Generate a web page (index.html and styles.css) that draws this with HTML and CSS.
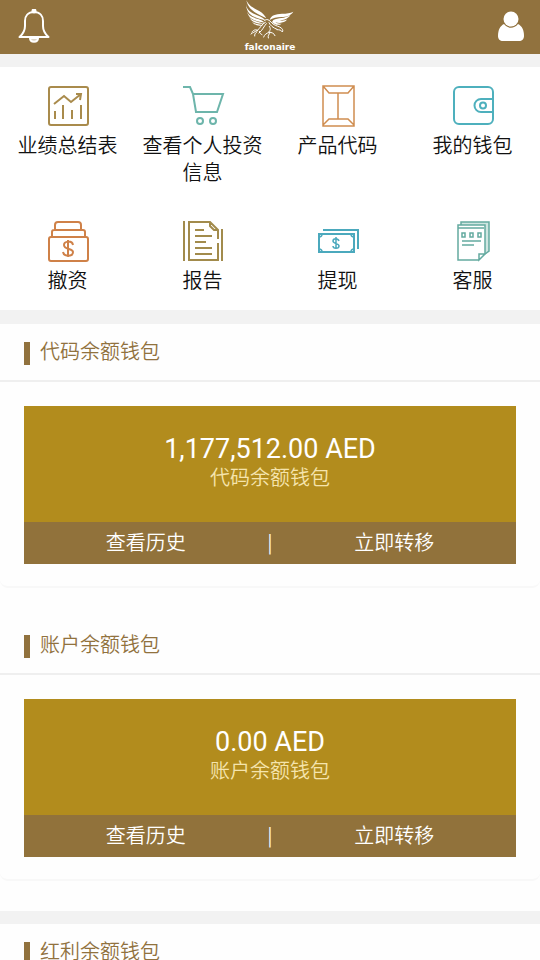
FILE: index.html
```html
<!DOCTYPE html>
<html lang="zh-CN">
<head>
    <meta charset="UTF-8">
    <meta name="viewport" content="width=device-width, initial-scale=1.0">
    <title>falconaire</title>
    <link rel="stylesheet" href="styles.css">
</head>
<body>
    <header class="header">
        <button class="icon-btn" type="button" aria-label="通知">
            <svg width="34" height="36" viewBox="0 0 34 36" fill="none" stroke="#fff" stroke-width="2" stroke-linejoin="round">
                <circle cx="18" cy="2" r="1.500" fill="#fff"/>
                <path d="M18 3C12 3 9 7 9 12v5c0 5-2 8-5.500 11h29C29 25 27 22 27 17v-5c0-5-3-9-9-9z"/>
                <path d="M14 29c0 5 8 5 8 0z" fill="#fff" fill-opacity=".7"/>
            </svg>
        </button>
        <a class="logo" href="#">
            <svg width="50" height="42" viewBox="30 0 150 126" fill="#fff" aria-hidden="true">
                <path d="M34 1c8 18 24 24 40 33 10 6 15 13 20 21C78 45 42 38 34 1z"/>
                <path d="M33 14c4 22 24 27 39 34 9 4 15 8 20 14C74 54 36 54 33 14z"/>
                <path d="M36 34c6 17 20 18 33 23 9 3 15 6 20 11C72 64 42 64 36 34z"/>
                <path d="M42 50c8 13 21 11 44 22-18 0-36-4-44-22z"/>
                <path d="M51 65c10 8 20 7 34 11-14 3-27 0-34-11z"/>
                <path d="M104 60c3-14 18-18 37-19 14 0 25-2 34-6-8 13-22 15-35 16-15 1-27 3-36 9z"/>
                <path d="M115 60c14-8 34-3 51-15-7 13-22 15-33 17 10 1 17 0 24-4-8 12-24 12-36 9 6 4 11 5 19 4-9 7-22 3-29-5z"/>
                <g fill="none" stroke="#fff" stroke-width="3" stroke-linecap="round">
                    <path d="M89 61c10-8 17 4 25 11 8 6 20 7 26 13 4 4 4 8 2 11-3-6-9-7-16-7"/>
                    <path d="M91 67C78 73 77 84 67 91c-7 5-14 6-19 11M94 71C86 79 84 90 72 99"/>
                    <path d="M68 91c-7-4-14 0-17 5M66 95c-5 4-8 8-7 13M73 94c0 5 4 8 8 10"/>
                    <path d="M103 79c5 7 3 12-2 17 9 1 17 4 19 11M104 97c-10 2-16 7-18 14M106 98c-5 5-8 10-6 16"/>
                    <path d="M102 68c4 9 12 15 24 20"/>
                </g>
            </svg>
            <span class="logo-name">falconaire</span>
        </a>
        <button class="icon-btn" type="button" aria-label="个人中心">
            <svg width="26" height="32" viewBox="0 0 26 32" fill="#fff">
                <path d="M6 13C2 15 0 19 0 25c0 3 2 5 5 5h16c3 0 5-2 5-5 0-6-2-10-6-12-4 5-10 5-14 0z"/>
                <circle cx="13" cy="8" r="7.500"/>
            </svg>
        </button>
    </header>

    <nav class="menu">
        <a class="menu-item" href="#">
            <svg class="menu-icon" viewBox="0 0 40 40" stroke="#a98b4c">
                <rect x="1" y="1" width="39" height="38" rx="2"/>
                <path d="M6 18l10-8 7 6L33 8M28 8h5l-1 6M7 25v8M15 19v14M24 24v9M33 19v14"/>
            </svg>
            <span>业绩总结表</span>
        </a>
        <a class="menu-item" href="#">
            <svg class="menu-icon" viewBox="0 0 40 40" stroke="#6db5ab">
                <path d="M0 1h7l3 7h30l-6 18H13L10 8"/>
                <circle cx="17" cy="35" r="3"/>
                <circle cx="30" cy="35" r="3"/>
            </svg>
            <span>查看个人投资信息</span>
        </a>
        <a class="menu-item" href="#">
            <svg class="menu-icon thin" viewBox="0 0 40 40" stroke="#cf8d50">
                <path d="M5 0h31v40H5zM5 0l6 7h19l6-7M5 40v-1l6-6h19l6 6v1M20 7v26"/>
            </svg>
            <span>产品代码</span>
        </a>
        <a class="menu-item" href="#">
            <svg class="menu-icon" viewBox="0 0 40 40" stroke="#4eb0bd">
                <rect x="1" y="1" width="39" height="37" rx="5"/>
                <path d="M40 13H28a6 6 0 0 0 0 13h12"/>
                <circle cx="30" cy="19.500" r="3"/>
            </svg>
            <span>我的钱包</span>
        </a>
        <a class="menu-item" href="#">
            <svg class="menu-icon" viewBox="0 0 40 40" stroke="#cf8148">
                <rect x="1" y="16" width="39" height="24" rx="2"/>
                <path d="M4 16v-5q0-2 2-2h29q2 0 2 2v5M7 9V4q0-3 3-3h20q3 0 3 3v5"/>
                <path d="M25 24c-1-5-9-4-9 0 0 5 9 3 9 7 0 5-9 5-10 0M20 19v17"/>
            </svg>
            <span>撤资</span>
        </a>
        <a class="menu-item" href="#">
            <svg class="menu-icon" viewBox="0 0 40 40" stroke="#a28b4c">
                <path d="M1 0v40M39 8v32M35 18V9l-8-8H6v38h29V22M27 1v4l4 4h4M12 9h9M12 15h17M12 21h11M12 27h17M12 33h17"/>
            </svg>
            <span>报告</span>
        </a>
        <a class="menu-item" href="#">
            <svg class="menu-icon thin" viewBox="0 0 40 40" stroke="#4ba9bd">
                <path d="M5 9h35v19" stroke-width="2"/>
                <path d="M1 13h35v18H1z" stroke-width="2"/>
                <path d="M1 16q3 0 3-3M33 13q0 3 3 3M1 28q3 0 3 3M36 28q-3 0-3 3"/>
                <path d="M21 20c-1-3-6-3-6 0s6 2 6 5-6 3-6 0M18 16v12"/>
            </svg>
            <span>提现</span>
        </a>
        <a class="menu-item" href="#">
            <svg class="menu-icon thin" viewBox="0 0 40 40" stroke="#64aaa0">
                <path d="M8 4V1h28v29l-4 3" fill="#cfe6e1"/>
                <path d="M5 4h27v29l-6 6H5zM26 39v-6h6z" fill="#fff"/>
                <path d="M5 7h26M9 20h19M9 24h12M9 12h3v4H9zM17 12h3v4h-3zM25 12h3v4h-3z"/>
            </svg>
            <span>客服</span>
        </a>
    </nav>

    <main>
        <div class="group">
            <section class="wallet">
                <h2 class="wallet-title">代码余额钱包</h2>
                <div class="wallet-body">
                    <div class="balance">
                        <p class="amount">1,177,512.00 AED</p>
                        <p class="label">代码余额钱包</p>
                    </div>
                    <div class="actions">
                        <a href="#">查看历史</a>
                        <span>|</span>
                        <a href="#">立即转移</a>
                    </div>
                </div>
            </section>
            <section class="wallet">
                <h2 class="wallet-title">账户余额钱包</h2>
                <div class="wallet-body">
                    <div class="balance">
                        <p class="amount">0.00 AED</p>
                        <p class="label">账户余额钱包</p>
                    </div>
                    <div class="actions">
                        <a href="#">查看历史</a>
                        <span>|</span>
                        <a href="#">立即转移</a>
                    </div>
                </div>
            </section>
        </div>
        <div class="group">
            <section class="wallet">
                <h2 class="wallet-title">红利余额钱包</h2>
            </section>
        </div>
    </main>
</body>
</html>
```
FILE: styles.css
```css
*{
    margin: 0;
    padding: 0;
    box-sizing: border-box;
}
body{
    background: #f2f2f2;
    color: #111;
    font-family: Roboto, "Noto Sans CJK SC", sans-serif;
    font-size: 20px;
    font-weight: 350;
    line-height: 27px;
}
a{
    color: inherit;
    text-decoration: none;
}
.header{
    display: grid;
    grid-template-columns: 1fr auto 1fr;
    height: 54px;
    padding: 0 16px;
    background: #91723e;
}
.icon-btn{
    display: flex;
    align-items: center;
    justify-self: start;
    border: 0;
    background: none;
    cursor: pointer;
}
.icon-btn:last-child{
    justify-self: end;
}
.logo{
    display: flex;
    flex-direction: column;
    align-items: center;
    color: #fff;
}
.logo-name{
    font-family: "DejaVu Sans", sans-serif;
    font-size: 9px;
    font-weight: bold;
    line-height: 11px;
}
.menu{
    display: grid;
    grid-template-columns: repeat(4, 1fr);
    margin: 13px 0 14px;
    background: #fff;
}
.menu-item{
    display: flex;
    flex-direction: column;
    align-items: center;
    gap: 7px;
    padding: 19px 5px 15px;
    text-align: center;
}
.menu-icon{
    width: 40px;
    height: 40px;
    fill: none;
    stroke-width: 2;
    overflow: visible;
}
.thin{
    stroke-width: 1.5;
}
.group{
    display: flex;
    flex-direction: column;
    gap: 29px;
    margin-bottom: 13px;
    padding-bottom: 30px;
    background: #fefefe;
}
.wallet{
    border-bottom: 2px solid #f8f8f8;
    border-radius: 0 0 8px 8px;
}
.wallet-title{
    display: flex;
    gap: 10px;
    padding: 15px 24px 14px;
    border-bottom: 2px solid #efefef;
    color: #91723e;
    font-size: 20px;
    font-weight: 350;
}
.wallet-title::before{
    content: "";
    width: 6px;
    margin: 3px 0 1px;
    background: #91723e;
}
.wallet-body{
    padding: 24px 24px 22px;
}
.balance{
    padding: 28px 16px 30px;
    background: #b28c1d;
    text-align: center;
}
.amount{
    color: #fff;
    font-size: 27px;
    font-weight: 400;
    line-height: 31px;
}
.label{
    color: #f5e4ad;
}
.actions{
    display: flex;
    align-items: center;
    height: 42px;
    background: #91723b;
    color: #fff;
}
.actions a{
    flex: 1;
    text-align: center;
}
.actions span{
    font-size: 24px;
    font-weight: 300;
}
```
